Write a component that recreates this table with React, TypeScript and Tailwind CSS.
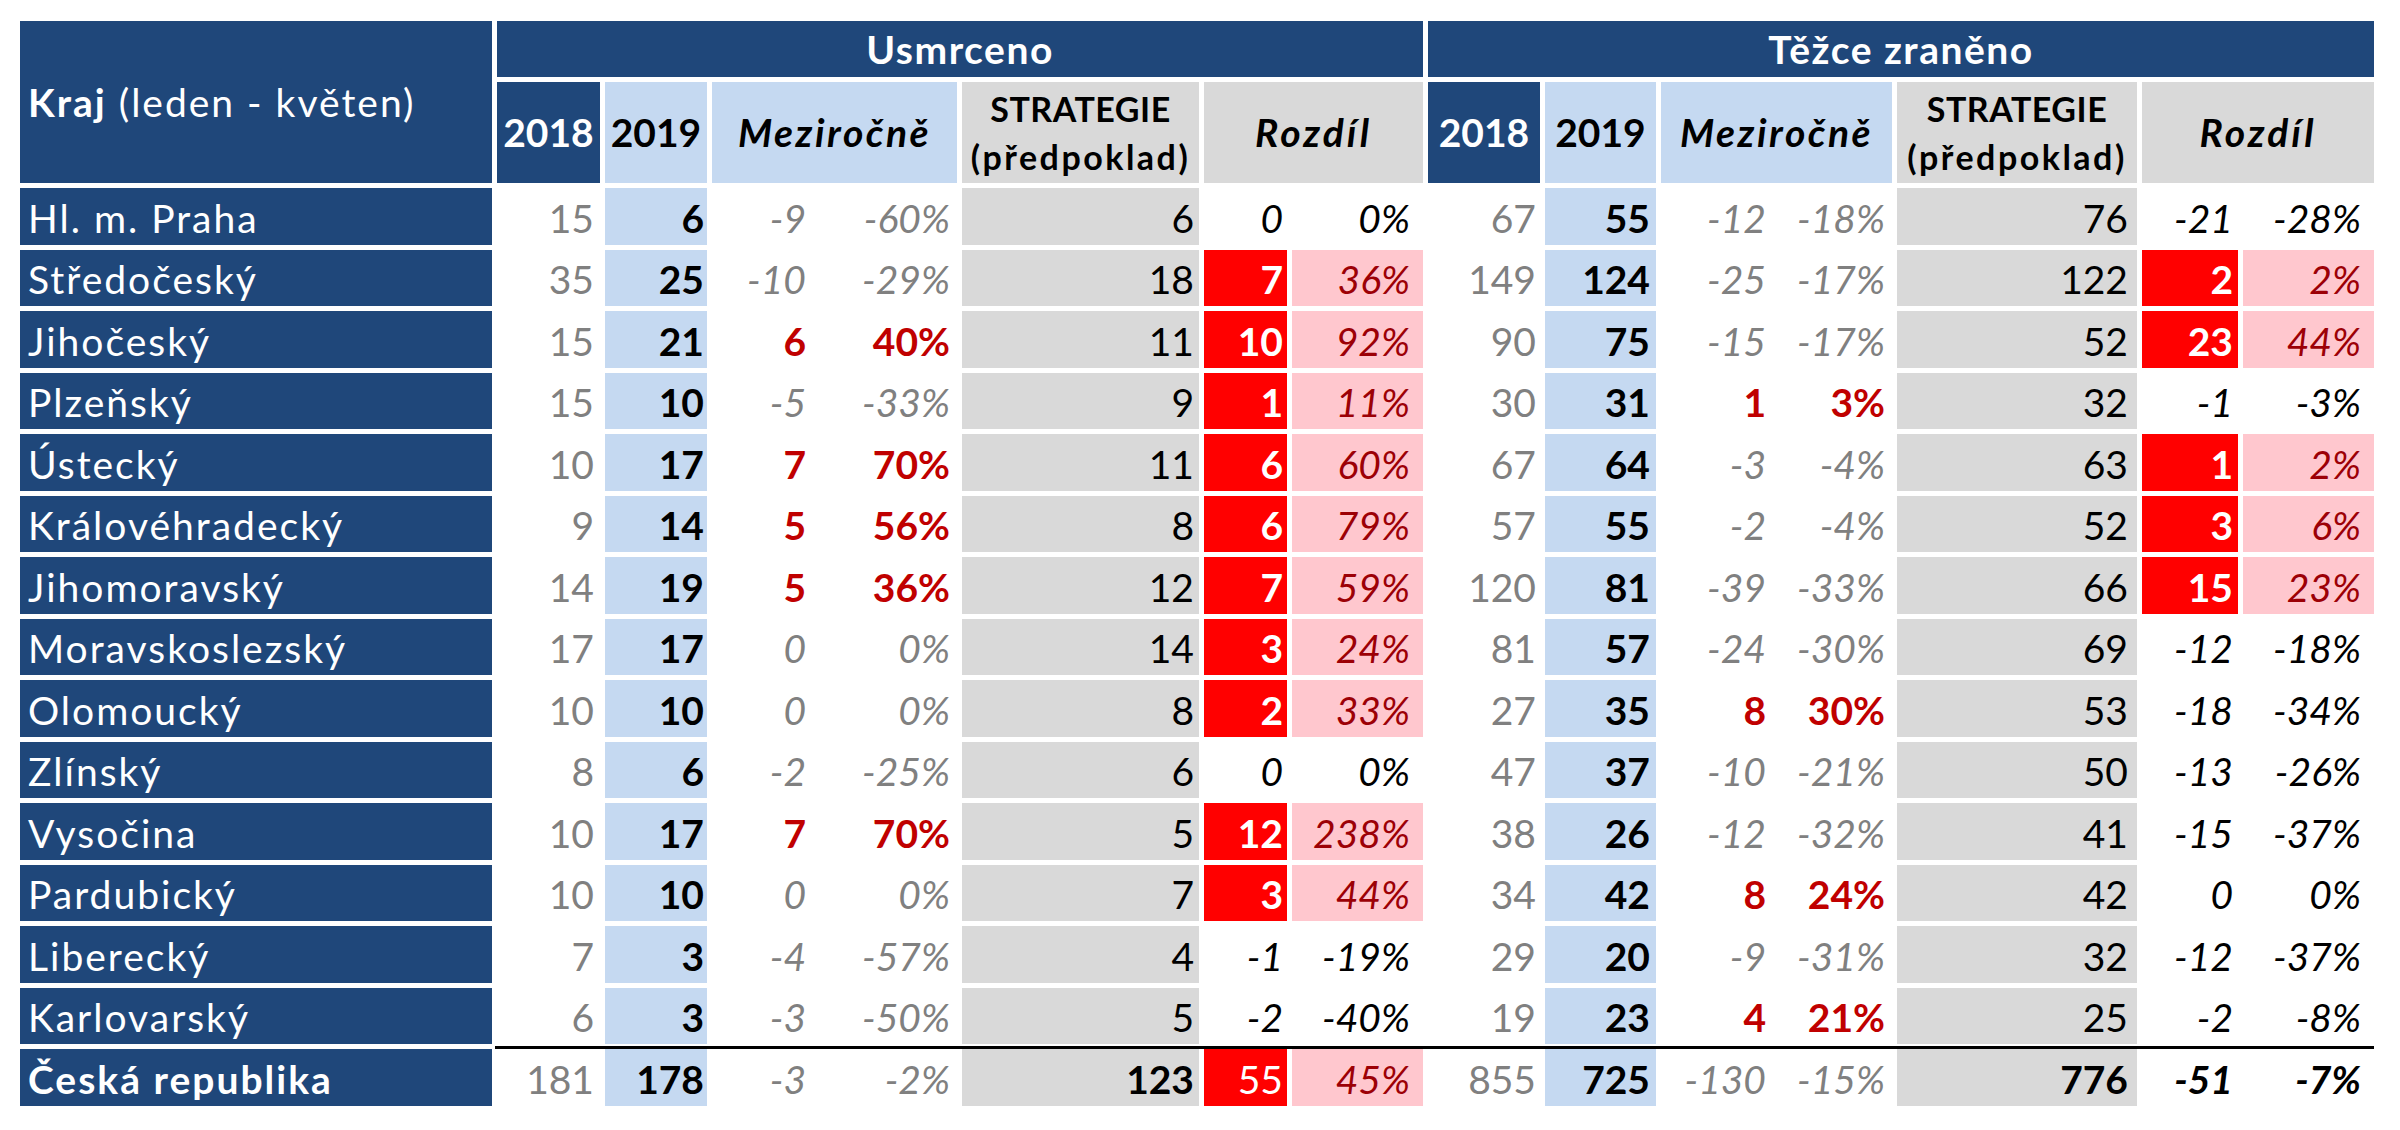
import React from 'react';

type Row = [string, number, number, number, string, number, number, string, number, number, number, string, number, number, string];

const rows: Row[] = [
  ['Hl. m. Praha', 15, 6, -9, '-60%', 6, 0, '0%', 67, 55, -12, '-18%', 76, -21, '-28%'],
  ['Středočeský', 35, 25, -10, '-29%', 18, 7, '36%', 149, 124, -25, '-17%', 122, 2, '2%'],
  ['Jihočeský', 15, 21, 6, '40%', 11, 10, '92%', 90, 75, -15, '-17%', 52, 23, '44%'],
  ['Plzeňský', 15, 10, -5, '-33%', 9, 1, '11%', 30, 31, 1, '3%', 32, -1, '-3%'],
  ['Ústecký', 10, 17, 7, '70%', 11, 6, '60%', 67, 64, -3, '-4%', 63, 1, '2%'],
  ['Královéhradecký', 9, 14, 5, '56%', 8, 6, '79%', 57, 55, -2, '-4%', 52, 3, '6%'],
  ['Jihomoravský', 14, 19, 5, '36%', 12, 7, '59%', 120, 81, -39, '-33%', 66, 15, '23%'],
  ['Moravskoslezský', 17, 17, 0, '0%', 14, 3, '24%', 81, 57, -24, '-30%', 69, -12, '-18%'],
  ['Olomoucký', 10, 10, 0, '0%', 8, 2, '33%', 27, 35, 8, '30%', 53, -18, '-34%'],
  ['Zlínský', 8, 6, -2, '-25%', 6, 0, '0%', 47, 37, -10, '-21%', 50, -13, '-26%'],
  ['Vysočina', 10, 17, 7, '70%', 5, 12, '238%', 38, 26, -12, '-32%', 41, -15, '-37%'],
  ['Pardubický', 10, 10, 0, '0%', 7, 3, '44%', 34, 42, 8, '24%', 42, 0, '0%'],
  ['Liberecký', 7, 3, -4, '-57%', 4, -1, '-19%', 29, 20, -9, '-31%', 32, -12, '-37%'],
  ['Karlovarský', 6, 3, -3, '-50%', 5, -2, '-40%', 19, 23, 4, '21%', 25, -2, '-8%'],
];

const total: Row = ['Česká republika', 181, 178, -3, '-2%', 123, 55, '45%', 855, 725, -130, '-15%', 776, -51, '-7%'];

const cell = 'flex items-center justify-end pt-[4px] whitespace-nowrap';

function Group({ y18, y19, diff, pct, strat, rozd, rozdPct, side, isTotal }: {
  y18: number; y19: number; diff: number; pct: string; strat: number; rozd: number; rozdPct: string; side: 'a' | 'b'; isTotal: boolean;
}) {
  const up = diff > 0;
  const over = rozd > 0;
  const mezi = up ? 'text-[#c00000] font-bold' : 'text-[#808080] italic';
  const bold = isTotal ? 'font-bold' : '';
  return (
    <>
      <div className={`${cell} bg-white text-[#808080] ${side === 'a' ? 'pr-[6px]' : 'pr-[4px]'}`}>{y18}</div>
      <div className={`${cell} bg-[#c5d9f1] text-black font-bold ${side === 'a' ? 'pr-[3px]' : 'pr-[6px]'}`}>{y19}</div>
      <div className={`${cell} bg-white pr-[4px] ${mezi}`}>{diff}</div>
      <div className={`${cell} bg-white pr-[7px] ${mezi}`}>{pct}</div>
      <div className={`${cell} bg-[#d9d9d9] text-black ${bold} ${side === 'a' ? 'pr-[5px]' : 'pr-[9px]'}`}>{strat}</div>
      <div className={`${cell} ${side === 'a' ? 'pr-[4px]' : 'pr-[5px]'} ${over ? `bg-[#ff0000] text-white ${isTotal ? '' : 'font-bold'}` : `bg-white text-black italic ${bold}`}`}>{rozd}</div>
      <div className={`${cell} pr-[13px] italic ${over ? 'bg-[#ffc7ce] text-[#9c0006]' : `bg-white text-black ${bold}`}`}>{rozdPct}</div>
    </>
  );
}

function DataRow({ r, isTotal }: { r: Row; isTotal?: boolean }) {
  return (
    <>
      <div className={`flex items-center pt-[4px] pl-[8px] bg-[#1f477a] text-white whitespace-nowrap tracking-[2px] ${isTotal ? 'font-bold' : ''}`}>{r[0]}</div>
      <Group y18={r[1]} y19={r[2]} diff={r[3]} pct={r[4]} strat={r[5]} rozd={r[6]} rozdPct={r[7]} side="a" isTotal={!!isTotal} />
      <Group y18={r[8]} y19={r[9]} diff={r[10]} pct={r[11]} strat={r[12]} rozd={r[13]} rozdPct={r[14]} side="b" isTotal={!!isTotal} />
    </>
  );
}

function SubHeader() {
  return (
    <>
      <div className="flex items-center justify-center bg-[#1f477a] text-white font-bold">2018</div>
      <div className="flex items-center justify-center bg-[#c5d9f1] text-black font-bold">2019</div>
      <div className="col-span-2 flex items-center justify-center bg-[#c5d9f1] text-black font-bold italic tracking-[2.5px]">Meziročně</div>
      <div className="flex flex-col items-center justify-center bg-[#d9d9d9] text-black font-bold text-[34px] leading-[48px] whitespace-nowrap">
        <span className="tracking-[0.5px]">STRATEGIE</span>
        <span className="tracking-[2.5px]">(předpoklad)</span>
      </div>
      <div className="col-span-2 flex items-center justify-center bg-[#d9d9d9] text-black font-bold italic tracking-[3px]">Rozdíl</div>
    </>
  );
}

export default function App() {
  return (
    <div className="min-h-screen bg-white pt-[21px] pl-[20px] font-['Lato',sans-serif] text-[39px] leading-[47px]">
      <div className="relative grid gap-[5px] grid-cols-[472px_103px_102px_98px_142px_237px_83px_131px_112px_111px_109px_117px_240px_96px_131px] grid-rows-[56px_101px_repeat(15,56.5px)] w-max">
        <div className="row-span-2 flex items-center pl-[8px] bg-[#1f477a] text-white whitespace-nowrap tracking-[2px]">
          <span className="font-bold">Kraj</span>
          <span>&nbsp;(leden - květen)</span>
        </div>
        <div className="col-span-7 flex items-center justify-center bg-[#1f477a] text-white font-bold tracking-[1.5px]">Usmrceno</div>
        <div className="col-span-7 flex items-center justify-center bg-[#1f477a] text-white font-bold tracking-[1.5px]">Těžce zraněno</div>
        <SubHeader />
        <SubHeader />
        {rows.map((r) => (
          <DataRow key={r[0]} r={r} />
        ))}
        <DataRow r={total} isTotal />
        {/* rule above the total row */}
        <div className="absolute left-[475px] right-0 top-[1025px] h-[3px] bg-black" />
      </div>
    </div>
  );
}
